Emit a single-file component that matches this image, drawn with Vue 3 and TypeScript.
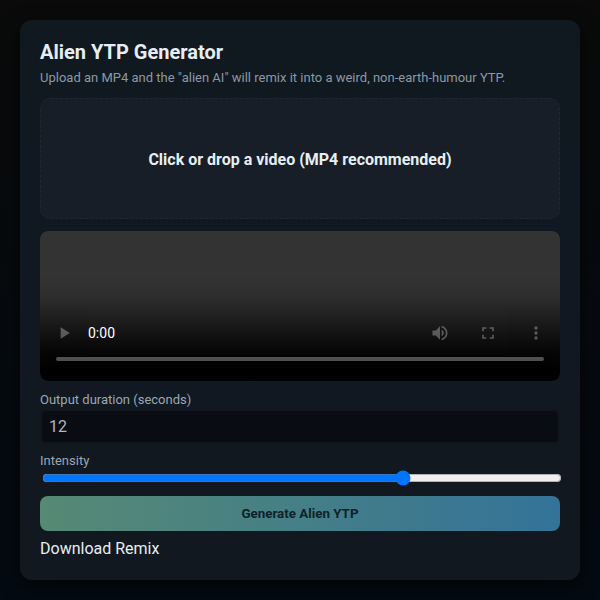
<script setup lang="ts">
import { ref } from 'vue'
const duration = ref<number>(12)
const intensity = ref<number>(0.7)
</script>

<template>
  <div class="page">
    <main class="card">
      <h1 class="title">Alien YTP Generator</h1>
      <p class="sub">Upload an MP4 and the "alien AI" will remix it into a weird, non-earth-humour YTP.</p>
      <div class="drop">Click or drop a video (MP4 recommended)</div>
      <video class="player" controls></video>
      <label class="lab lab-dur">Output duration (seconds)</label>
      <input class="num" type="number" v-model="duration" />
      <label class="lab lab-int">Intensity</label>
      <input class="range" type="range" min="0" max="1" step="0.01" v-model="intensity" />
      <button class="gen" type="button">Generate Alien YTP</button>
      <a class="dl">Download Remix</a>
    </main>
  </div>
</template>

<style>
html, body { margin: 0; background: #050507; }
</style>

<style scoped>
.page {
  width: 600px;
  height: 600px;
  box-sizing: border-box;
  padding: 20px;
  background: linear-gradient(180deg, #0a0a0a 0%, #030a12 100%);
  font-family: Roboto, "Liberation Sans", sans-serif;
  overflow: hidden;
}
.card {
  height: 560px;
  box-sizing: border-box;
  padding: 20px;
  border-radius: 12px;
  background: linear-gradient(180deg, #101820 0%, #111822 50%, #12181f 100%);
  box-shadow: 0 6px 20px rgba(0, 0, 0, 0.6);
  display: flex;
  flex-direction: column;
  align-items: stretch;
}
.card > * { flex-shrink: 0; }
.title {
  margin: 0;
  font-size: 20px;
  line-height: 24px;
  font-weight: 700;
  color: #e6eef3;
}
.sub {
  margin: 6px 0 0;
  font-size: 13px;
  line-height: 16px;
  color: #8b98a5;
}
.drop {
  margin-top: 12px;
  height: 121px;
  box-sizing: border-box;
  padding-top: 2px;
  border: 1px dashed #1f2731;
  border-radius: 10px;
  background: #171e27;
  display: flex;
  align-items: center;
  justify-content: center;
  font-size: 16px;
  font-weight: 700;
  color: #e6eef3;
}
.player {
  margin-top: 12px;
  width: 520px;
  height: 150px;
  display: block;
  background: #000;
  border-radius: 8px;
}
.lab {
  display: block;
  font-size: 13px;
  line-height: 16px;
  color: #9aa7b3;
}
.lab-dur { margin-top: 11px; }
.lab-int { margin-top: 9px; }
.num {
  margin-top: 1px;
  height: 35px;
  box-sizing: border-box;
  padding: 6px 7px;
  border: 2px solid #10161d;
  outline: 0;
  border-radius: 6px;
  background: #090d13;
  color: #aeb8c1;
  font-family: inherit;
  font-size: 16px;
}
.range {
  margin: 1px 0 0 2px;
  width: 520px;
  height: 16px;
  display: block;
}
.gen {
  margin-top: 10px;
  height: 35px;
  border: 0;
  border-radius: 8px;
  background: linear-gradient(90deg, #568a74 0%, #347399 100%);
  color: #0d2229;
  font-family: inherit;
  font-size: 13.33px;
  font-weight: 700;
}
.dl {
  margin-top: 8px;
  font-size: 16px;
  line-height: 19px;
  color: #e6eef3;
}
</style>
